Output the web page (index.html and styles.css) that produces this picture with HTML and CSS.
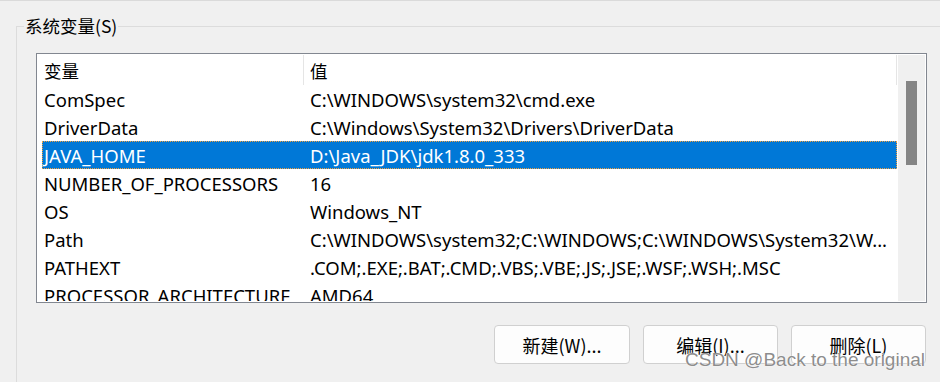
FILE: index.html
```html
<!DOCTYPE html>
<html lang="zh-CN">
<head>
    <meta charset="UTF-8" />
    <title>系统变量</title>
    <link rel="stylesheet" href="styles.css">
</head>
<body>
    <fieldset class="group">
        <legend>系统变量(S)</legend>
        <div class="list">
            <div class="table">
                <div class="row head">
                    <span class="c1">变量</span>
                    <span class="c2">值</span>
                </div>
                <div class="row"><span class="c1">ComSpec</span><span class="c2">C:\WINDOWS\system32\cmd.exe</span></div>
                <div class="row"><span class="c1">DriverData</span><span class="c2">C:\Windows\System32\Drivers\DriverData</span></div>
                <div class="row selected"><span class="c1">JAVA_HOME</span><span class="c2">D:\Java_JDK\jdk1.8.0_333</span></div>
                <div class="row"><span class="c1">NUMBER_OF_PROCESSORS</span><span class="c2">16</span></div>
                <div class="row"><span class="c1">OS</span><span class="c2">Windows_NT</span></div>
                <div class="row"><span class="c1">Path</span><span class="c2">C:\WINDOWS\system32;C:\WINDOWS;C:\WINDOWS\System32\W...</span></div>
                <div class="row"><span class="c1">PATHEXT</span><span class="c2">.COM;.EXE;.BAT;.CMD;.VBS;.VBE;.JS;.JSE;.WSF;.WSH;.MSC</span></div>
                <div class="row"><span class="c1">PROCESSOR_ARCHITECTURE</span><span class="c2">AMD64</span></div>
            </div>
            <div class="scrollbar"><div class="thumb"></div></div>
        </div>
        <div class="buttons">
            <button class="btn wide">新建(W)...</button>
            <button class="btn">编辑(I)...</button>
            <button class="btn">删除(L)</button>
        </div>
    </fieldset>
    <div class="watermark">CSDN @Back to the original</div>
</body>
</html>
```

FILE: styles.css
```css
* { box-sizing: border-box; }
body {
    margin: 0;
    height: 382px;
    overflow: hidden;
    position: relative;
    background: #f0f0f0;
    border-top: 1px solid #dadada;
    color: #000;
    font-family: "Segoe UI", "Noto Sans", "Noto Sans CJK SC", sans-serif;
    font-size: 18.5px;
}

/* group box */
.group {
    margin: 13px -40px 0 16px;
    padding: 0 0 0 7px;
    height: 420px;
    border: 1px solid #dcdcdc;
    border-right: none;
    border-bottom: none;
}
.group legend {
    padding: 0 1px;
    line-height: 24px;
    font-family: "Noto Sans CJK SC", sans-serif;
    font-size: 17.5px;
}

/* list view */
.list {
    display: flex;
    width: 891px;
    height: 250px;
    margin: 15px 0 0 12px;
    padding: 1px;
    border: 1px solid #828790;
    background: #fff;
    overflow: hidden;
}
.table {
    flex: 1;
    overflow: hidden;
}
.row {
    display: flex;
    height: 28px;
    margin-left: 4px;
    border: 1px dotted transparent;
    align-items: center;
    white-space: nowrap;
}
.row .c1 {
    width: 265px;
    padding-left: 1px;
    flex-shrink: 0;
}
.row .c2 {
    flex: 1;
    padding-left: 2px;
    overflow: hidden;
}
.row.head {
    height: 30px;
    border: none;
    align-items: stretch;
    font-family: "Noto Sans CJK SC", sans-serif;
    font-size: 17.5px;
}
.row.head .c1,
.row.head .c2 {
    display: flex;
    align-items: center;
    border-right: 1px solid #e5e5e5;
}
.row.head .c1 { width: 262px; padding-left: 2px; }
.row.head .c2 { padding-left: 6px; }
.row.selected {
    background: #0078d7;
    color: #fff;
    border-color: #f0a040;
}

.scrollbar {
    width: 27px;
    margin-left: 1px;
    background: #f0f0f0;
}
.thumb {
    width: 11px;
    height: 84px;
    margin: 26px 0 0 8px;
    background: #858585;
}

/* buttons */
.buttons {
    display: flex;
    justify-content: flex-end;
    gap: 13px;
    width: 891px;
    margin: 22px 0 0 12px;
    padding-right: 1px;
}
.btn {
    width: 135px;
    height: 39px;
    border: 1px solid #d0d0d0;
    border-radius: 4px;
    background: #fdfdfd;
    color: #000;
    font-family: "Noto Sans CJK SC", sans-serif;
    font-size: 18px;
}
.btn.wide { width: 136px; }

.watermark {
    position: absolute;
    right: 15px;
    top: 348px;
    font-family: "Liberation Sans", Arial, sans-serif;
    font-size: 19px;
    color: rgba(110, 110, 110, 0.8);
    text-shadow: 0 0 1px #fff, 0 0 1px #fff;
}
```
